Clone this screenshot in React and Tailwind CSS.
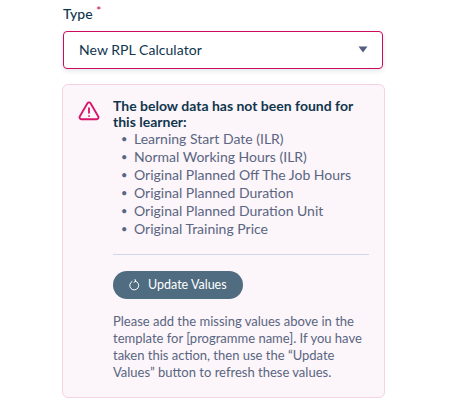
import React from "react";

const missing = [
  "Learning Start Date (ILR)",
  "Normal Working Hours (ILR)",
  "Original Planned Off The Job Hours",
  "Original Planned Duration",
  "Original Planned Duration Unit",
  "Original Training Price",
];

const App = () => {
  return (
    <div className="min-h-[417px] bg-white pl-[63px] pr-[76px] font-['Lato',sans-serif]">
      <div className="pt-[5px] h-[31px] text-[14px] leading-[18px] font-medium text-[#10364f]">
        Type <span className="relative top-[-4px] text-[12px] text-[#cc0a5e]">*</span>
      </div>

      <div className="flex h-[38px] items-center justify-between rounded-[4px] border border-[#cc0a5e] bg-white pb-[2px] pl-[15px] pr-[15px] text-[14px] tracking-[0.05px] text-[#10364f] shadow-[0_2px_5px_rgba(16,54,79,0.12)]">
        <span>New RPL Calculator</span>
        <svg width="10" height="7" viewBox="0 0 10 7" className="mr-[-1px]">
          <path d="M0.5 0.5h9L5 6.5z" fill="#535f7f" />
        </svg>
      </div>

      <div className="mt-[15px] ml-[-1px] mr-[-2px] flex h-[314px] gap-[13px] rounded-[6px] border border-[#f6d3e2] bg-[#fcf5f9] pl-[15px] pr-[15px] pt-[13px]">
        <svg width="22" height="22" viewBox="0 0 24 24" fill="none" stroke="#d6146a" strokeWidth="2" strokeLinecap="round" strokeLinejoin="round" className="mt-[2px] shrink-0">
          <path d="M10.3 3.6 1.9 18a2 2 0 0 0 1.7 3h16.8a2 2 0 0 0 1.7-3L13.7 3.6a2 2 0 0 0-3.4 0z" />
          <path d="M12 9v5" />
          <path d="M12 17.5h.01" />
        </svg>

        <div className="flex-1">
          <p className="text-[14px] leading-[16px] font-bold text-[#10364f]">
            The below data has not been found for this learner:
          </p>
          <ul className="text-[14px] leading-[18px] text-[#596582]">
            {missing.map((item) => (
              <li key={item} className="flex">
                <span className="w-[21px] pl-[8px] text-[11px]">•</span>
                {item}
              </li>
            ))}
          </ul>

          <div className="mt-[16px] border-t border-[#cfd8e8]" />

          <button className="mt-[16px] flex h-[28px] w-[130px] items-center gap-[8px] rounded-full bg-[#4f6c80] pl-[15px] text-[12.5px] text-white">
            <svg width="12" height="12" viewBox="0 0 24 24" fill="none" stroke="white" strokeWidth="2" strokeLinecap="round" strokeLinejoin="round">
              <path d="M14.5 4a9 9 0 1 1-6.5 .9" />
              <path d="M14 1l1.5 3.5L12 6.5" />
            </svg>
            Update Values
          </button>

          <p className="mt-[14px] text-[13px] leading-[17px] text-[#596582]">
            Please add the missing values above in the template for [programme name]. If you have taken this action, then use the “Update Values” button to refresh these values.
          </p>
        </div>
      </div>
    </div>
  );
};

export default App;
